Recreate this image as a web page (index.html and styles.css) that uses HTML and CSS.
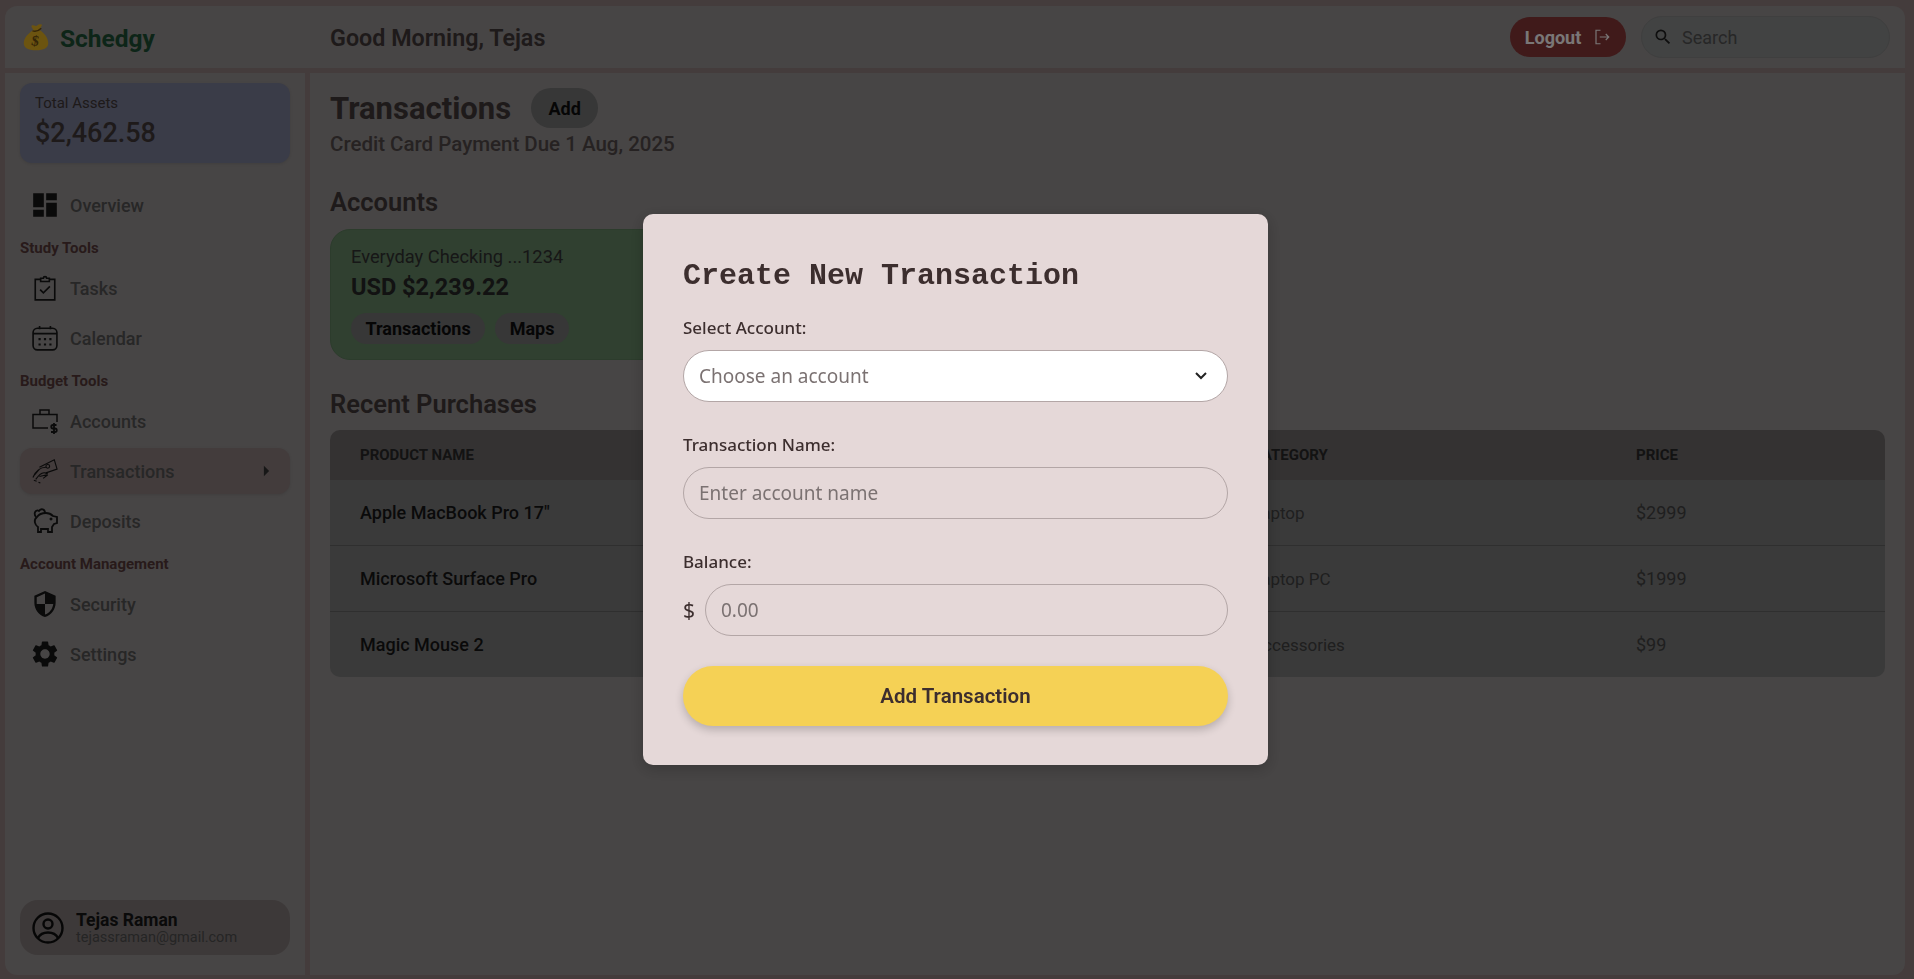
FILE: index.html
```html
<!DOCTYPE html>
<html>
<head>
    <title>Schedgy - Transactions</title>
    <link rel="stylesheet" href="styles.css">
</head>
<body>
    <header class="navbar">
        <div class="brand">
            <svg class="brand-icon" viewBox="0 0 32 32">
                <path fill="#d9a821" d="M13 8c-1-2-3-4-2-5 2-1 4 1 6 0 2-2 5-2 6-1l-3 6c5 3 10 9 10 15 0 5-5 8-14 8S2 28 2 23C2 17 8 11 13 8z"/>
                <path fill="none" stroke="#6b4c10" stroke-width="1.8" d="M12 9c3 1 7 0 10-3"/>
                <text x="15" y="26" text-anchor="middle" transform="rotate(10 15 21)" class="brand-dollar">$</text>
            </svg>
            <span class="brand-name">Schedgy</span>
        </div>
        <div class="greeting">Good Morning, Tejas</div>
        <button class="logout">Logout
            <svg class="logout-icon" viewBox="0 0 24 24" fill="none" stroke="currentColor" stroke-width="1.6">
                <path d="M10 3H4v18h6M9 12h12M17 8l4 4-4 4"/>
            </svg>
        </button>
        <div class="search">
            <svg class="search-icon" viewBox="0 0 24 24"><path d="M15.5 14h-.79l-.28-.27A6.47 6.47 0 0 0 16 9.5 6.5 6.5 0 1 0 9.5 16c1.61 0 3.09-.59 4.23-1.57l.27.28v.79l5 4.99L20.49 19l-4.99-5zm-6 0C7.01 14 5 11.99 5 9.5S7.01 5 9.5 5 14 7.01 14 9.5 11.99 14 9.5 14z"/></svg>
            <span>Search</span>
        </div>
    </header>

    <div class="layout">
        <aside class="sidebar">
            <div class="assets">
                <div class="assets-label">Total Assets</div>
                <div class="assets-value">$2,462.58</div>
            </div>

            <nav class="menu">
                <a class="menu-item">
                    <svg class="menu-icon" viewBox="1 1 22 22"><path d="M2 2h9v12H2zM2 16h9v6H2zM13 10h9v12h-9zM13 2h9v6h-9z"/></svg>
                    Overview
                </a>
                <div class="menu-title">Study Tools</div>
                <a class="menu-item">
                    <svg class="menu-icon line" viewBox="0 0 24 24" stroke-width="1.5"><path d="M8 4H3v19h18V4h-5"/><path d="M8 6V3h2.500a1.500 1.500 0 0 1 3 0H16v3z"/><path d="M7.500 13.500l3 3 6-6"/></svg>
                    Tasks
                </a>
                <a class="menu-item">
                    <svg class="menu-icon line" viewBox="0 0 24 24" stroke-width="1.5"><rect x="1" y="3" width="22" height="20" rx="4"/><path d="M1 8h22M7 1v3M17 1v3"/><path stroke-width="2" stroke-dasharray="2 3" d="M6 13h13M6 18h13"/></svg>
                    Calendar
                </a>
                <div class="menu-title">Budget Tools</div>
                <a class="menu-item">
                    <svg class="menu-icon line" viewBox="0 0 26 26" stroke-width="1.5"><path d="M16 20H1V6.500h24V14M8 6V2h9v4"/><path stroke-width="1.800" d="M24.500 17h-3.500a1.500 1.500 0 0 0 0 3.500h2a1.500 1.500 0 0 1 0 3.500h-4M22 15v11"/></svg>
                    Accounts
                </a>
                <a class="menu-item menu-active">
                    <svg class="menu-icon line" viewBox="0 0 28 26" stroke-width="1.200"><path d="M8 9l16-8 3 10-12 4"/><circle cx="17" cy="8" r="2"/><path d="M1 20c3-7 7-11 14-11M4 22c3-4 6-8 10-7l3 1M8 19l8-2M2 23l3 1M7 25l2 1M3 17l5-6M12 21l5-4"/></svg>
                    Transactions
                    <svg class="menu-caret" viewBox="0 0 8 12"><path d="M1 0l6 6-6 6z"/></svg>
                </a>
                <a class="menu-item">
                    <svg class="menu-icon line" viewBox="0 0 26 26" stroke-width="1.800"><path d="M5 9c2-3 5-4 9-4 3 0 5 1 7 3l4 1v6l-3 1-2 3v5h-4v-3H9v3H6v-5C3 17 1 12 5 9z"/><path d="M4 9C1 5 4 1 7 3c2-3 6-2 6 2"/><circle cx="19" cy="11" r=".6"/></svg>
                    Deposits
                </a>
                <div class="menu-title">Account Management</div>
                <a class="menu-item">
                    <svg class="menu-icon" viewBox="1.500 1 21 22"><path d="M12 1L3 5v6c0 5.550 3.840 10.740 9 12 5.160-1.260 9-6.450 9-12V5l-9-4zm0 10.990h7c-.53 4.120-3.280 7.790-7 8.940V12H5V6.300l7-3.110v8.800z"/></svg>
                    Security
                </a>
                <a class="menu-item">
                    <svg class="menu-icon" viewBox="2 2 20 20"><path d="M19.140 12.940c.04-.3.06-.61.06-.94 0-.32-.02-.64-.07-.94l2.030-1.580a.49.49 0 0 0 .12-.61l-1.920-3.320a.488.488 0 0 0-.59-.22l-2.390.96c-.5-.38-1.030-.7-1.620-.94l-.36-2.540a.484.484 0 0 0-.48-.41h-3.840c-.24 0-.43.17-.47.41l-.36 2.540c-.59.24-1.130.57-1.620.94l-2.390-.96c-.22-.08-.47 0-.59.22L2.740 8.870c-.12.21-.08.47.12.61l2.030 1.580c-.05.3-.09.63-.09.94s.02.64.07.94l-2.030 1.580a.49.49 0 0 0-.12.61l1.920 3.320c.12.22.37.29.59.22l2.390-.96c.5.38 1.030.7 1.620.94l.36 2.540c.05.24.24.41.48.41h3.840c.24 0 .44-.17.47-.41l.36-2.540c.59-.24 1.130-.56 1.620-.94l2.390.96c.22.08.47 0 .59-.22l1.920-3.320c.12-.22.07-.47-.12-.61l-2.010-1.580zM12 15.600c-1.980 0-3.600-1.620-3.600-3.600s1.620-3.600 3.600-3.600 3.600 1.620 3.600 3.600-1.620 3.600-3.600 3.600z"/></svg>
                    Settings
                </a>
            </nav>

            <div class="user">
                <svg class="user-icon" viewBox="0 0 32 32" fill="none" stroke="#0c0c0c" stroke-width="2.400"><circle cx="16" cy="16" r="14.500"/><circle cx="16" cy="12" r="4.500"/><path d="M6 26c2-4 6-5.500 10-5.500s8 1.500 10 5.500"/></svg>
                <div>
                    <div class="user-name">Tejas Raman</div>
                    <div class="user-email">tejassraman@gmail.com</div>
                </div>
            </div>
        </aside>

        <main class="content">
            <div class="title-row">
                <h1>Transactions</h1>
                <button class="add-btn">Add</button>
            </div>
            <p class="due">Credit Card Payment Due 1 Aug, 2025</p>

            <h2 class="accounts-title">Accounts</h2>
            <div class="account-card">
                <div class="account-name">Everyday Checking ...1234</div>
                <div class="account-balance">USD $2,239.22</div>
                <div class="account-links">
                    <span class="pill">Transactions</span>
                    <span class="pill">Maps</span>
                </div>
            </div>

            <h2 class="recent-title">Recent Purchases</h2>
            <table class="purchases">
                <colgroup>
                    <col class="col-name"><col class="col-color"><col class="col-category"><col>
                </colgroup>
                <thead>
                    <tr><th>Product name</th><th>Color</th><th>Category</th><th>Price</th></tr>
                </thead>
                <tbody>
                    <tr><td class="product">Apple MacBook Pro 17"</td><td>Silver</td><td>Laptop</td><td class="price">$2999</td></tr>
                    <tr><td class="product">Microsoft Surface Pro</td><td>White</td><td>Laptop PC</td><td class="price">$1999</td></tr>
                    <tr><td class="product">Magic Mouse 2</td><td>Black</td><td>Accessories</td><td class="price">$99</td></tr>
                </tbody>
            </table>
        </main>
    </div>

    <div class="overlay">
        <form class="modal">
            <h2 class="modal-title">Create New Transaction</h2>
            <label class="field-label">Select Account:</label>
            <div class="field field-select">
                <span>Choose an account</span>
                <svg class="chevron" viewBox="0 0 14 10" fill="none" stroke="#222" stroke-width="2"><path d="M2 2l5 5 5-5"/></svg>
            </div>
            <label class="field-label">Transaction Name:</label>
            <div class="field">Enter account name</div>
            <label class="field-label">Balance:</label>
            <div class="balance-row">
                <span class="currency">$</span>
                <div class="field">0.00</div>
            </div>
            <button type="button" class="submit">Add Transaction</button>
        </form>
    </div>
</body>
</html>
```

FILE: styles.css
```css
/* Page frame */
html, body {
    height: 100%;
}

body {
    margin: 0;
    box-sizing: border-box;
    height: 979px;
    padding: 6px 9px 4px 5px;
    overflow: hidden;
    background-color: #887878;
    color: #3c3434;
    font-family: 'Roboto', 'Liberation Sans', sans-serif;
    display: flex;
    flex-direction: column;
    gap: 5px;
}

button {
    font-family: inherit;
    border: none;
}

/* Top bar */
.navbar {
    height: 62px;
    flex-shrink: 0;
    display: flex;
    align-items: center;
    background-color: #8e8a8a;
    border-radius: 12px 12px 0 0;
    padding-right: 15px;
}

.brand {
    width: 325px;
    display: flex;
    align-items: center;
    gap: 10px;
    padding-left: 17px;
    box-sizing: border-box;
}

.brand-icon {
    width: 28px;
    height: 30px;
}

.brand-dollar {
    font-family: 'Liberation Serif', serif;
    font-size: 17px;
    font-weight: bold;
    fill: #6b4c10;
}

.brand-name {
    margin-top: 2px;
    font-size: 24.500px;
    font-weight: 700;
    color: #1a4a30;
}

.greeting {
    flex: 1;
    margin-top: 2px;
    font-size: 23.300px;
    font-weight: 600;
    color: #3c3434;
}

.logout {
    width: 116px;
    height: 40px;
    margin-right: 15px;
    display: flex;
    align-items: center;
    justify-content: center;
    gap: 12px;
    border-radius: 20px;
    background-color: #803434;
    color: #f4eeee;
    font-size: 18px;
    font-weight: 700;
}

.logout-icon {
    width: 18px;
    height: 18px;
}

.search {
    width: 249px;
    height: 42px;
    box-sizing: border-box;
    display: flex;
    align-items: center;
    gap: 9px;
    padding-left: 11px;
    border: 1px solid #7e7e7e;
    border-radius: 21px;
    background-color: #848686;
    color: #4e4e4e;
    font-size: 18px;
}

.search-icon {
    width: 20px;
    height: 20px;
    fill: #1c1c1c;
}

/* Columns under the top bar */
.layout {
    flex: 1;
    display: flex;
    gap: 5px;
    min-height: 0;
}

.sidebar {
    width: 300px;
    flex-shrink: 0;
    box-sizing: border-box;
    display: flex;
    flex-direction: column;
    padding: 10px 15px 20px;
    background-color: #8e8a8a;
    border-radius: 0 0 0 12px;
}

.assets {
    height: 80px;
    box-sizing: border-box;
    padding: 10px 15px;
    background-color: #747890;
    border-radius: 12px;
    box-shadow: 0 1px 3px rgba(0, 0, 0, 0.1);
}

.assets-label {
    font-size: 15px;
    line-height: 20px;
}

.assets-value {
    margin-top: 3px;
    font-size: 27px;
    line-height: 34px;
    font-weight: 500;
}

.menu {
    margin-top: 19px;
    display: flex;
    flex-direction: column;
}

.menu-item {
    height: 46px;
    margin-bottom: 4px;
    display: flex;
    align-items: center;
    gap: 12px;
    padding-left: 12px;
    border-radius: 12px;
    color: #4e4e4e;
    font-size: 18px;
    font-weight: 500;
}

.menu-icon {
    width: 26px;
    height: 26px;
    flex-shrink: 0;
    fill: #141414;
}

.menu-icon.line {
    fill: none;
    stroke: #141414;
}

.menu-active {
    background-color: #867878;
    box-shadow: 0 1px 3px rgba(0, 0, 0, 0.1);
}

.menu-caret {
    width: 7px;
    height: 12px;
    margin-left: auto;
    margin-right: 20px;
    fill: #2e2e2e;
}

.menu-title {
    height: 33px;
    line-height: 33px;
    margin-top: -4px;
    padding-top: 4px;
    font-size: 15px;
    font-weight: 700;
    color: #503535;
}

.user {
    margin-top: auto;
    height: 55px;
    display: flex;
    align-items: center;
    gap: 12px;
    padding-left: 12px;
    background-color: #7a7272;
    border-radius: 18px;
}

.user-icon {
    width: 32px;
    height: 32px;
}

.user-name {
    font-size: 17.500px;
    line-height: 20px;
    font-weight: 700;
    color: #141414;
}

.user-email {
    font-size: 14.500px;
    line-height: 16px;
    color: #4a4a4a;
}

/* Main column */
.content {
    flex: 1;
    padding: 15px 20px 0;
    background-color: #8e8a8a;
    border-radius: 0 0 12px 0;
}

.title-row {
    display: flex;
    align-items: center;
    gap: 20px;
    height: 40px;
}

h1 {
    margin: 0;
    font-size: 31px;
    font-weight: 700;
    color: #3c3434;
}

.add-btn {
    width: 67px;
    height: 40px;
    border-radius: 20px;
    background-color: #6e6e6e;
    color: #0c0c0c;
    font-size: 18px;
    font-weight: 700;
}

.due {
    margin: 3px 0 0;
    font-size: 20.500px;
    line-height: 26px;
    font-weight: 500;
    color: #4c4444;
}

.accounts-title,
.recent-title {
    margin: 0;
    font-size: 25.500px;
    line-height: 32px;
    font-weight: 600;
    color: #3c3434;
}

.accounts-title {
    margin-top: 29px;
}

.account-card {
    width: 400px;
    height: 131px;
    box-sizing: border-box;
    margin-top: 11px;
    padding: 16px 20px;
    background-color: #608060;
    border: 1px solid #587858;
    border-radius: 20px;
}

.account-name {
    font-size: 18.300px;
    line-height: 22px;
    color: #2e2e2e;
}

.account-balance {
    margin-top: 4px;
    font-size: 23.500px;
    line-height: 30px;
    font-weight: 700;
    color: #242424;
}

.account-links {
    display: flex;
    gap: 10px;
    margin-top: 11px;
}

.pill {
    height: 31px;
    line-height: 31px;
    padding: 0 14.500px;
    border-radius: 16px;
    background-color: #6e6e6e;
    color: #0c0c0c;
    font-size: 18px;
    font-weight: 700;
}

.recent-title {
    margin-top: 28px;
}

.purchases {
    width: 100%;
    margin-top: 10px;
    table-layout: fixed;
    border-collapse: separate;
    border-spacing: 0;
    border-radius: 10px;
    overflow: hidden;
}

.col-name {
    width: 448px;
}

.col-color {
    width: 444px;
}

.col-category {
    width: 384px;
}

.purchases th {
    height: 50px;
    padding: 0 0 0 30px;
    text-align: left;
    font-size: 15px;
    font-weight: 700;
    text-transform: uppercase;
    background-color: #686464;
    color: #262626;
}

.purchases td {
    height: 65px;
    padding: 0 0 0 30px;
    font-size: 17px;
    background-color: #747474;
    color: #3e3e3e;
    border-bottom: 1px solid #5e5e5e;
}

.purchases tr:last-child td {
    border-bottom: none;
}

.purchases .product {
    font-size: 18px;
    font-weight: 500;
    color: #141414;
}

.purchases .price {
    font-size: 18px;
}

/* Modal */
.overlay {
    position: fixed;
    inset: 0;
    display: flex;
    align-items: center;
    justify-content: center;
    padding-right: 3px;
    background-color: rgba(0, 0, 0, 0.5);
}

.modal {
    width: 625px;
    height: 551px;
    box-sizing: border-box;
    padding: 40px;
    background-color: #e5d8d8;
    color: #3c2e2e;
    border-radius: 10px;
    box-shadow: 0 4px 14px rgba(0, 0, 0, 0.2);
    font-family: 'Noto Sans', 'Open Sans', sans-serif;
}

.modal-title {
    margin: 2px 0 0;
    height: 41px;
    line-height: 41px;
    font-family: 'Liberation Mono', monospace;
    font-size: 30px;
    font-weight: 700;
}

.field-label {
    display: block;
    margin-top: 19px;
    font-size: 17px;
    font-weight: 500;
    line-height: 24px;
}

.field {
    flex: 1;
    height: 52px;
    box-sizing: border-box;
    display: flex;
    align-items: center;
    margin-top: 10px;
    margin-bottom: 31px;
    padding: 0 15px;
    border: 1px solid #b3a6a6;
    border-radius: 26px;
    color: #7b7272;
    font-size: 19px;
}

.field-select {
    background-color: #fff;
    justify-content: space-between;
}

.chevron {
    width: 14px;
    height: 10px;
    margin-right: 4px;
}

.balance-row {
    display: flex;
    align-items: center;
    gap: 12px;
}

.balance-row .field {
    margin-bottom: 0;
}

.currency {
    width: 10px;
    margin-top: 9px;
    font-size: 21px;
}

.submit {
    display: block;
    width: 100%;
    height: 60px;
    margin-top: 30px;
    border-radius: 30px;
    background-color: #f5d155;
    color: #3c2e2e;
    font-family: 'Roboto', sans-serif;
    font-size: 20.500px;
    font-weight: 600;
    box-shadow: 0 4px 8px rgba(0, 0, 0, 0.2);
}
```
